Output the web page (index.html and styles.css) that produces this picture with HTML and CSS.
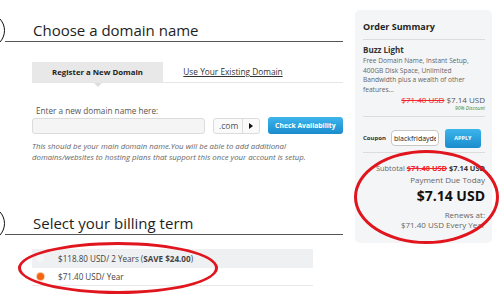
FILE: index.html
```html
<!DOCTYPE html>
<html>
  <head>
    <title>Checkout</title>
    <meta name="viewport" content="width=device-width, initial-scale=1" />
    <link rel="stylesheet" href="styles.css">
  </head>
  <body>
    <div class="page">
      <main class="checkout">
        <section class="step">
          <div class="step-head">
            <span class="step-num"></span>
            <h2 class="step-title">Choose a domain name</h2>
          </div>
          <div class="step-body">
            <div class="tabs">
              <div class="tab tab-active">Register a New Domain</div>
              <a class="tab tab-link" href="#">Use Your Existing Domain</a>
            </div>
            <label class="field-label" for="domain">Enter a new domain name here:</label>
            <div class="domain-row">
              <input id="domain" class="domain-input" type="text" />
              <div class="tld">
                <span class="tld-text">.com</span>
                <span class="tld-arrow"></span>
              </div>
              <button class="btn btn-check" type="button">Check Availability</button>
            </div>
            <p class="help">
              This should be your main domain name.You will be able to add additional<br />
              domains/websites to hosting plans that support this once your account is setup.
            </p>
          </div>
        </section>

        <section class="step step-billing">
          <div class="step-head">
            <span class="step-num"></span>
            <h2 class="step-title">Select your billing term</h2>
          </div>
          <div class="step-body">
            <div class="billing">
              <div class="term term-alt">
                <span class="radio"></span>
                <span>$118.80 USD/ 2 Years (<b>SAVE $24.00</b>)</span>
              </div>
              <div class="term term-last">
                <span class="radio radio-on"></span>
                <span>$71.40 USD/ Year</span>
              </div>
            </div>
          </div>
        </section>
      </main>

      <aside class="summary">
        <h3 class="summary-title">Order Summary</h3>
        <div class="summary-block">
          <div class="plan-name">Buzz Light</div>
          <div class="plan-desc">
            Free Domain Name, Instant Setup,<br />
            400GB Disk Space, Unlimited<br />
            Bandwidth plus a wealth of other<br />
            features...
          </div>
          <div class="price-row"><s class="old-price">$71.40 USD</s> $7.14 USD</div>
          <div class="discount">90% Discount</div>
        </div>
        <div class="coupon">
          <span class="coupon-label">Coupon</span>
          <input class="coupon-input" type="text" value="blackfridaydeal" />
          <button class="btn btn-apply" type="button">APPLY</button>
        </div>
        <div class="totals">
          <div class="subtotal">Subtotal <s class="old-price strong">$71.40 USD</s> <b class="dark">$7.14 USD</b></div>
          <div>Payment Due Today</div>
          <div class="due">$7.14 USD</div>
          <div class="renew">Renews at:<br />$71.40 USD Every Year</div>
        </div>
      </aside>
    </div>

    <div class="mark mark-billing"></div>
    <div class="mark mark-total"></div>
  </body>
</html>
```

FILE: styles.css
```css
body {
  margin: 0;
  font-family: "Open Sans", sans-serif;
  background: #fff;
  color: #333;
  overflow: hidden;
}

.page {
  display: flex;
  align-items: flex-start;
}

.checkout {
  width: 337px;
  margin-left: 6px;
  padding-top: 12px;
}

.step-head {
  display: flex;
  align-items: center;
  height: 36px;
}

.step-num {
  flex: none;
  width: 33px;
  height: 33px;
  margin-left: -36px;
  border: 1.5px solid #111;
  border-radius: 50%;
}

.step-title {
  flex: 1;
  margin: 0;
  padding-left: 28px;
  font-size: 15px;
  font-weight: 400;
  line-height: 22px;
  color: #1e1e1e;
  border-bottom: 1px solid #555;
}

.step-body {
  padding-left: 26px;
}

.tabs {
  display: flex;
  margin-top: 14px;
  border-bottom: 1px solid #e6e6e6;
}

.tab {
  height: 20px;
  line-height: 20px;
  font-size: 8.3px;
  text-align: center;
  color: #333;
}

.tab-active {
  position: relative;
  width: 131px;
  background: #e8e8e8;
  font-size: 7.8px;
  font-weight: 700;
  color: #222;
}

.tab-active::after {
  content: "";
  position: absolute;
  left: 50%;
  bottom: -5px;
  margin-left: -4px;
  border-left: 4px solid transparent;
  border-right: 4px solid transparent;
  border-top: 4px solid #dedede;
}

.tab-link {
  width: 140px;
  text-decoration: underline;
}

.field-label {
  display: block;
  margin-top: 22px;
  padding-left: 4px;
  font-size: 8.2px;
  line-height: 12px;
  color: #555;
}

.domain-row {
  display: flex;
  align-items: center;
  height: 17px;
}

.domain-input {
  width: 173px;
  height: 16px;
  box-sizing: border-box;
  margin: 0;
  padding: 0;
  border: 1px solid #dcdcdc;
  border-radius: 3px;
  background: #f5f5f5;
}

.tld {
  display: flex;
  width: 49px;
  height: 16px;
  box-sizing: border-box;
  margin-left: 8px;
  border: 1px solid #dcdcdc;
  border-radius: 3px;
  background: #fafafa;
  font-size: 8.5px;
  color: #555;
}

.tld-text {
  flex: 1;
  padding-left: 5px;
  line-height: 14px;
}

.tld-arrow {
  display: flex;
  align-items: center;
  justify-content: center;
  width: 16px;
  border-left: 1px solid #dcdcdc;
}

.tld-arrow::before {
  content: "";
  border-left: 4px solid #111;
  border-top: 3px solid transparent;
  border-bottom: 3px solid transparent;
}

.btn {
  padding: 0;
  border: 0;
  border-radius: 3px;
  background: linear-gradient(#3db5ec, #1a8ccd);
  color: #fff;
  font-family: inherit;
  font-weight: 700;
}

.btn-check {
  width: 79px;
  height: 17px;
  margin-left: 8px;
  font-size: 6.8px;
}

.help {
  margin: 7px 0 0;
  font-size: 7.8px;
  font-style: italic;
  line-height: 11px;
  color: #666;
}

.step-billing {
  margin-top: 42px;
}

.billing {
  width: 281px;
  margin-top: 8px;
}

.term {
  display: flex;
  align-items: center;
  height: 19px;
  font-size: 8.1px;
  color: #444;
}

.term-alt {
  background: #eef0f1;
}

.term-last {
  height: 17px;
  border-bottom: 1px solid #e8e8e8;
}

.radio {
  flex: none;
  width: 7px;
  height: 7px;
  margin: 0 14px 0 5px;
  border-radius: 50%;
  background: #f6f6f6;
}

.radio-on {
  background: #f2640f;
  box-shadow: 0 0 0 1px #f8c8a6;
}

.summary {
  flex: none;
  width: 137px;
  height: 233px;
  box-sizing: border-box;
  margin: 10px 0 0 12px;
  padding: 9px 7px 0 8px;
  background: #f4f5f7;
  border-radius: 5px;
  font-size: 8px;
  color: #666;
  white-space: nowrap;
}

.summary-title {
  margin: 0;
  padding-bottom: 4px;
  font-size: 9px;
  line-height: 16px;
  color: #1e1e1e;
  border-bottom: 1px solid #dcdcdc;
}

.summary-block {
  padding: 3px 0 4px;
  border-bottom: 1px solid #dcdcdc;
}

.plan-name {
  font-size: 8px;
  font-weight: 700;
  line-height: 13px;
  color: #333;
}

.plan-desc {
  font-size: 6.6px;
  line-height: 9.6px;
}

.price-row {
  text-align: right;
  font-size: 8px;
  line-height: 11px;
  color: #555;
}

.old-price {
  color: #f2232b;
}

.strong {
  font-weight: 700;
}

.discount {
  text-align: right;
  font-size: 5px;
  font-style: italic;
  line-height: 7px;
  color: #3f8a3a;
}

.coupon {
  display: flex;
  align-items: center;
  height: 20px;
  margin-top: 11px;
  padding-bottom: 4px;
  border-bottom: 1px solid #dcdcdc;
}

.coupon-label {
  font-size: 6px;
  font-weight: 700;
  color: #333;
}

.coupon-input {
  width: 48px;
  height: 16px;
  box-sizing: border-box;
  margin: 0 0 0 5px;
  padding: 0 2px;
  border: 1px solid #c8c8c8;
  border-radius: 4px;
  background: #fff;
  font-family: inherit;
  font-size: 7px;
  color: #222;
}

.btn-apply {
  width: 36px;
  height: 19px;
  margin-left: 6px;
  font-size: 5.5px;
}

.totals {
  margin-top: 10px;
  text-align: right;
  font-size: 8px;
  line-height: 11px;
}

.subtotal {
  font-size: 7.4px;
}

.dark {
  color: #333;
}

.due {
  margin-top: 2px;
  font-size: 14px;
  font-weight: 700;
  line-height: 18px;
  color: #111;
}

.renew {
  margin-top: 5px;
  line-height: 10px;
}

.mark {
  position: absolute;
  box-sizing: border-box;
  border: 3px solid #e0151d;
  border-radius: 50%;
  pointer-events: none;
}

.mark-billing {
  left: 18px;
  top: 242px;
  width: 200px;
  height: 52px;
}

.mark-total {
  left: 354px;
  top: 150px;
  width: 145px;
  height: 94px;
}
```
